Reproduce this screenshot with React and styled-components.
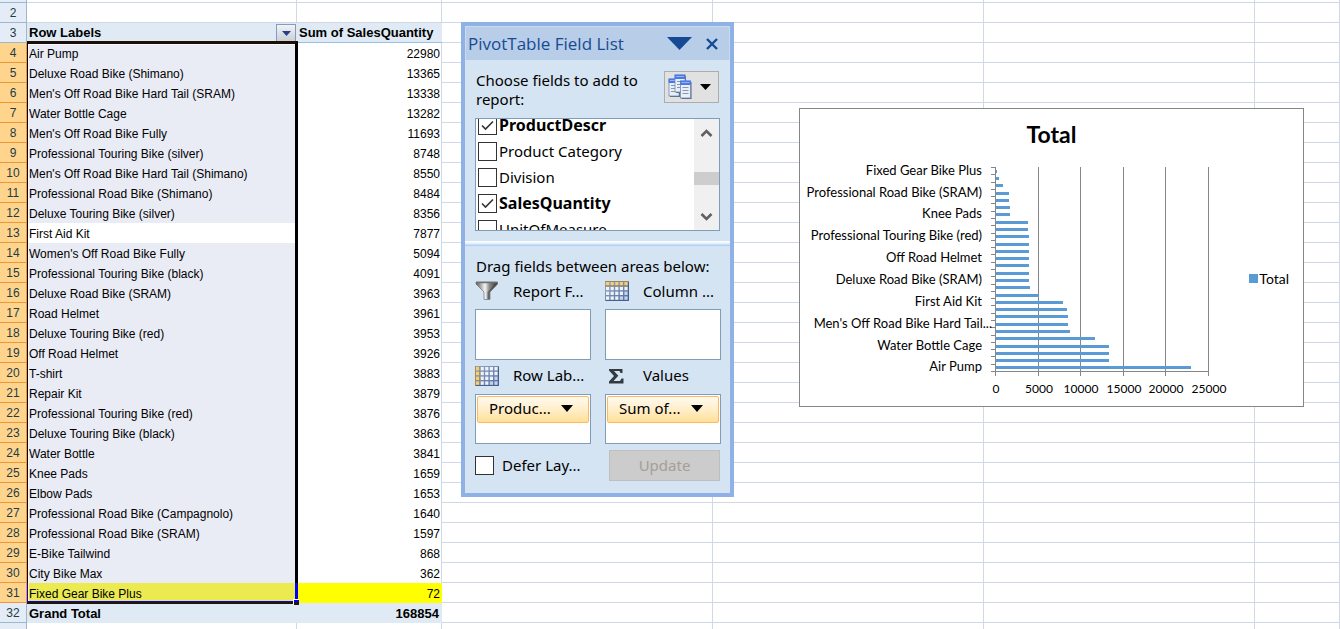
import React from "react";
import styled, { createGlobalStyle } from "styled-components";

const GlobalStyle = createGlobalStyle`
  *, *::before, *::after { box-sizing: border-box; }
  body { margin: 0; background: #fff; }
`;

const color = {
  grid: "#d0d7e5",
  header: "#e4ecf7",
  headerLine: "#9eb6ce",
  active: "#ffd58d",
  activeLine: "#f29536",
  pivot: "#dfeaf5",
  pivotLine: "#9bc0e6",
  selection: "#e9ebf5",
  frame: "#8fb1e5",
  panel: "#d5e4f2",
  box: "#7f9db9",
  bar: "#5b9bd5",
  axis: "#868686",
};

const rows = [
  ["Air Pump", 22980],
  ["Deluxe Road Bike (Shimano)", 13365],
  ["Men's Off Road Bike Hard Tail (SRAM)", 13338],
  ["Water Bottle Cage", 13282],
  ["Men's Off Road Bike Fully", 11693],
  ["Professional Touring Bike (silver)", 8748],
  ["Men's Off Road Bike Hard Tail (Shimano)", 8550],
  ["Professional Road Bike (Shimano)", 8484],
  ["Deluxe Touring Bike (silver)", 8356],
  ["First Aid Kit", 7877],
  ["Women's Off Road Bike Fully", 5094],
  ["Professional Touring Bike (black)", 4091],
  ["Deluxe Road Bike (SRAM)", 3963],
  ["Road Helmet", 3961],
  ["Deluxe Touring Bike (red)", 3953],
  ["Off Road Helmet", 3926],
  ["T-shirt", 3883],
  ["Repair Kit", 3879],
  ["Professional Touring Bike (red)", 3876],
  ["Deluxe Touring Bike (black)", 3863],
  ["Water Bottle", 3841],
  ["Knee Pads", 1659],
  ["Elbow Pads", 1653],
  ["Professional Road Bike (Campagnolo)", 1640],
  ["Professional Road Bike (SRAM)", 1597],
  ["E-Bike Tailwind", 868],
  ["City Bike Max", 362],
  ["Fixed Gear Bike Plus", 72],
];

/* ---------- worksheet ---------- */

const Workbook = styled.main`
  position: relative;
  height: 100vh;
  overflow: hidden;
  font-family: "Liberation Sans", Arial, sans-serif;
  font-size: 12px;
  color: #000;
`;

const Sheet = styled.table`
  width: 100%;
  min-width: 1260px;
  table-layout: fixed;
  border-collapse: separate;
  border-spacing: 0;
`;

const Col = styled.col`
  width: ${(p) => (p.$w ? `${p.$w}px` : "auto")};
`;

const Row = styled.tr`
  height: ${(p) => p.$h || 20}px;
`;

const RowNumber = styled.th`
  padding: ${(p) => (p.$blank ? 0 : 1)}px 0 0;
  font-weight: 400;
  line-height: 18px;
  text-align: center;
  color: #1f3c46;
  background: ${(p) => (p.$active ? color.active : color.header)};
  border-right: 1px solid ${(p) => (p.$active ? color.activeLine : color.headerLine)};
  border-bottom: 1px solid ${(p) => (p.$active ? color.activeLine : color.headerLine)};
`;

const Cell = styled.td`
  padding: 0;
  border-right: 1px solid ${color.grid};
  border-bottom: 1px solid ${color.grid};
`;

const LabelCell = styled.td`
  padding: 2px 2px 0;
  line-height: 18px;
  text-align: left;
  white-space: nowrap;
  background: ${(p) => p.$bg};
`;

const ValueCell = styled.td`
  padding: 2px 1px 0;
  line-height: 18px;
  text-align: right;
  background: ${(p) => p.$bg || "#fff"};
  border-right: 1px solid ${(p) => p.$bg || color.grid};
`;

const FieldHead = styled.th`
  padding: 0 0 0 2px;
  font-size: 13px;
  line-height: 18px;
  text-align: left;
  white-space: nowrap;
  background: ${color.pivot};
  border-bottom: 1px solid ${color.pivotLine};
`;

const HeadRow = styled.div`
  display: flex;
  justify-content: space-between;
  align-items: center;
  height: 19px;
  padding: 1px 1px 0 0;
`;

const TotalCell = styled.td`
  padding: 2px 3px 0 2px;
  font-size: 13px;
  font-weight: 700;
  line-height: 18px;
  text-align: ${(p) => (p.$right ? "right" : "left")};
  background: ${color.pivot};
`;

const FilterButton = styled.button`
  display: flex;
  align-items: center;
  justify-content: center;
  width: 20px;
  height: 19px;
  padding: 0;
  border: 1px solid #7f9cc6;
  background: linear-gradient(#f1f2f3, #c9cdd2);
`;

const Selection = styled.div`
  position: absolute;
  top: 41px;
  left: 27px;
  width: 271px;
  height: 563px;
  border: 3px solid #000;
  border-left-width: 1px;
  border-top-color: #1c0f06;
  border-bottom-color: #20140f;
  box-shadow: inset 1px 1px 0 rgba(255, 255, 255, 0.7);
  pointer-events: none;

  &::before {
    content: "";
    position: absolute;
    right: -3px;
    bottom: -1px;
    left: -1px;
    height: 19px;
    border: solid #0000ff;
    border-width: 0 3px 1px 1px;
  }
`;

const FillHandle = styled.span`
  position: absolute;
  right: -4px;
  bottom: -4px;
  width: 6px;
  height: 6px;
  border: solid #fff;
  border-width: 1px 0 0 1px;
  background: linear-gradient(#0000ff 50%, #2a1508 50%);
`;

/* ---------- field list window ---------- */

const Panel = styled.aside`
  position: absolute;
  top: 22px;
  left: 461px;
  width: 273px;
  border: 4px solid ${color.frame};
  background: ${color.panel};
  font-family: "Noto Sans", Tahoma, sans-serif;
  font-size: 15px;
  line-height: 19px;
`;

const TitleBar = styled.header`
  display: flex;
  align-items: center;
  height: 34px;
  padding: 0 11px 0 2px;
  border: 1px solid #c9dbf0;
  border-bottom: 0;
  background: #b8cde8;
`;

const PanelTitle = styled.h2`
  flex: 1;
  margin: 0;
  font-family: "Open Sans", "Segoe UI", sans-serif;
  font-size: 17px;
  font-weight: 400;
  line-height: 24px;
  color: #174a94;
`;

const TitleButton = styled.button`
  display: flex;
  padding: 0;
  margin-left: 14px;
  border: 0;
  background: none;
`;

const Section = styled.section`
  padding: ${(p) => (p.$lower ? "11px 9px 12px 10px" : "11px 10px 10px 10px")};
`;

const Chooser = styled.div`
  display: flex;
  justify-content: space-between;
  align-items: flex-start;
  height: 47px;
  padding-right: 1px;
`;

const Prompt = styled.p`
  width: ${(p) => (p.$full ? "auto" : "180px")};
  margin: 0 0 0 1px;
`;

const LayoutButton = styled.button`
  display: flex;
  align-items: center;
  justify-content: space-between;
  width: 55px;
  height: 32px;
  padding: 0 7px 0 3px;
  border: 1px solid #adadad;
  background: #e1e1e1;
`;

const ListBox = styled.div`
  display: flex;
  height: 113px;
  overflow: hidden;
  border: 1px solid ${color.box};
  background: #fff;
`;

const Fields = styled.ul`
  flex: 1;
  margin: -7px 0 0;
  padding: 0 0 0 2px;
  list-style: none;
`;

const Field = styled.label`
  display: flex;
  align-items: center;
  gap: 2px;
  height: 26px;
  font-size: ${(p) => (p.$bold ? 16 : 15)}px;
  font-weight: ${(p) => (p.$bold ? 700 : 400)};
`;

const BoxWrap = styled.span`
  display: grid;
  width: 19px;
  height: 19px;
  flex: none;

  & > * {
    grid-area: 1 / 1;
  }
  svg {
    pointer-events: none;
  }
`;

const Box = styled.input`
  appearance: none;
  width: 19px;
  height: 19px;
  margin: 0;
  border: 1px solid #333;
  background: #fff;
`;

const ScrollBar = styled.div`
  display: flex;
  flex-direction: column;
  align-items: center;
  width: 25px;
  padding: 9px 0 8px;
  background: #f0f0f0;
`;

const Thumb = styled.div`
  width: 25px;
  height: 13px;
  margin: auto 0 27px;
  background: #cdcdcd;
`;

const Splitter = styled.hr`
  height: 5px;
  margin: 0;
  border: 0;
  background: linear-gradient(#ffffff, #e4effb 50%, #a5c8f5);
`;

const Areas = styled.div`
  display: grid;
  grid-template-columns: 1fr 1fr;
  column-gap: 14px;
`;

const AreaTitle = styled.h3`
  display: flex;
  align-items: center;
  gap: 14px;
  height: ${(p) => (p.$tall ? 34 : 33)}px;
  margin: 0;
  padding-bottom: 3px;
  font-size: 15px;
  font-weight: 400;
  white-space: nowrap;
`;

const DropZone = styled.div`
  height: ${(p) => (p.$filled ? 50 : 51)}px;
  padding: 1px;
  border: 1px solid ${color.box};
  background: #fff;
`;

const Pill = styled.button`
  display: flex;
  align-items: center;
  justify-content: space-between;
  width: 100%;
  height: 27px;
  padding: 0 15px 2px 11px;
  border: 1px solid #fdb95f;
  border-radius: 2px;
  background: linear-gradient(#fffaf0, #ffeec8 50%, #ffe09a);
  font: inherit;
  color: #000;
`;

const Footer = styled.div`
  display: flex;
  justify-content: space-between;
  align-items: center;
  margin-top: 6px;
  padding-right: 1px;
`;

const Defer = styled.label`
  display: flex;
  align-items: center;
  gap: 8px;
`;

const UpdateButton = styled.button`
  width: 111px;
  height: 31px;
  padding: 0;
  border: 1px solid #bfbfbf;
  background: #cccccc;
  font: inherit;
  color: #a3a096;
`;

/* ---------- chart object ---------- */

const Chart = styled.figure`
  position: absolute;
  top: 108px;
  left: 799px;
  width: 505px;
  margin: 0;
  border: 1px solid #868686;
  background: #fff;
  font-family: Lato, Calibri, sans-serif;
  font-size: 13px;
`;

const ChartTitle = styled.figcaption`
  height: 51px;
  padding-top: 11px;
  font-size: 23px;
  font-weight: 700;
  line-height: 28px;
  text-align: center;
`;

const ChartBody = styled.div`
  display: flex;
  justify-content: space-between;
  padding-right: 14px;
`;

const Legend = styled.div`
  display: flex;
  align-items: center;
  gap: 1px;
  height: 236px;
  font-size: 14px;
`;

const Swatch = styled.span`
  width: 9px;
  height: 9px;
  background: ${color.bar};
`;

/* ---------- icons ---------- */

const Down = ({ w, h, fill = "#000" }) => (
  <svg width={w} height={h} viewBox="0 0 10 6" preserveAspectRatio="none" aria-hidden="true">
    <path d="M0 0H10L5 6Z" fill={fill} />
  </svg>
);

const Chevron = ({ up }) => (
  <svg width="13" height="10" viewBox="0 0 13 10" aria-hidden="true">
    <path d={up ? "M1.5 8L6.5 3L11.5 8" : "M1.5 2L6.5 7L11.5 2"} fill="none" stroke="#606060" strokeWidth="2.6" />
  </svg>
);

const CloseIcon = () => (
  <svg width="12" height="12" viewBox="0 0 12 12" aria-hidden="true">
    <path d="M1 1L11 11M11 1L1 11" stroke="#174a94" strokeWidth="2.4" />
  </svg>
);

const Page = ({ x, y }) => (
  <g transform={`translate(${x} ${y})`}>
    <rect x="1" y="1" width="10" height="17" fill="#56647c" />
    <rect width="10" height="17" fill="#e9eff8" stroke="#7189b0" strokeWidth=".8" />
    <rect x="-.4" y="-.4" width="10.8" height="4.4" fill="#4a78e6" />
    <rect x="1" y="1" width="8" height="1" fill="#8fb5ff" />
    <path d="M2 6.5H8M2 9.5H8M2 12.5H8" stroke="#8797b2" />
  </g>
);

const LayoutIcon = () => (
  <svg width="24" height="26" viewBox="0 0 24 26" aria-hidden="true">
    <Page x={1} y={5} />
    <Page x={7} y={1} />
    <Page x={12.5} y={7} />
  </svg>
);

const FunnelIcon = () => (
  <svg width="24" height="20" viewBox="0 0 24 20" aria-hidden="true">
    <defs>
      <linearGradient id="funnel">
        <stop offset="0" stopColor="#555" />
        <stop offset=".42" stopColor="#f6f6f6" />
        <stop offset=".62" stopColor="#8a8a8a" />
        <stop offset="1" stopColor="#333" />
      </linearGradient>
    </defs>
    <path d="M1 1H22.5V3L15 11V18.5H9V11L1 3Z" fill="url(#funnel)" stroke="#666" strokeWidth=".6" />
    <path d="M1 1.5H22.5" stroke="#6e6e6e" strokeWidth="1.4" />
    <path d="M14.6 11V18H12.5V11L20 3.5H22Z" fill="#444" opacity=".6" />
  </svg>
);

const GridIcon = ({ side }) => (
  <svg width="24" height="20" viewBox="0 0 24 20" aria-hidden="true">
    <defs>
      <linearGradient id="cells" x2="1" y2="1">
        <stop offset="0" stopColor="#98a6c2" />
        <stop offset="1" stopColor="#4f6ca0" />
      </linearGradient>
    </defs>
    <rect width="24" height="20" fill="url(#cells)" />
    {[0, 1, 2, 3, 4].map((c) =>
      [0, 1, 2, 3].map((r) => {
        const gold = side ? c === 0 : r === 0;
        return (
          <rect key={`${c}-${r}`} x={1 + c * 4.6} y={1 + r * 4.8} width="3.2" height="3.4"
            fill={gold ? "#f2cf78" : c + r > 5 ? "#c3d2ee" : "#eef2fb"} />
        );
      })
    )}
    {side
      ? <path d="M.5 0V20M4.8 0V20" stroke="#a98a48" />
      : <path d="M0 .5H24M0 5H24" stroke="#9d8355" />}
    <path d="M23.5 1V19.5H1" fill="none" stroke="#44608f" />
  </svg>
);

const SigmaIcon = () => (
  <svg width="24" height="20" viewBox="0 0 24 20" aria-hidden="true">
    <path d="M4 3H17.5V7H15.5L14.5 5H9L13.3 9.8L8.5 15H15L16.5 12.5H18.5V17.5H4V15.5L9 10L4 4.5Z" fill="#333a42" />
  </svg>
);

/* ---------- pieces ---------- */

function CheckBox({ id, checked }) {
  return (
    <BoxWrap>
      <Box id={id} type="checkbox" defaultChecked={checked} />
      {checked && (
        <svg width="19" height="19" viewBox="0 0 19 19" aria-hidden="true">
          <path d="M4 9.5L7.5 13L15 5.5" fill="none" stroke="#333" strokeWidth="1.6" />
        </svg>
      )}
    </BoxWrap>
  );
}

function Blanks() {
  return (
    <>
      <Cell />
      <Cell />
      <Cell />
      <Cell />
    </>
  );
}

function Worksheet() {
  return (
    <Sheet>
      <colgroup>
        {[27, 270, 145, 271, 271, 271, 0].map((w, i) => <Col key={i} $w={w} />)}
      </colgroup>
      <tbody>
        <Row $h={3}><RowNumber $blank /><Cell /><Cell /><Blanks /></Row>
        <Row><RowNumber scope="row">2</RowNumber><Cell /><Cell /><Blanks /></Row>
        <Row>
          <RowNumber scope="row">3</RowNumber>
          <FieldHead scope="col">
            <HeadRow>
              Row Labels
              <FilterButton aria-label="Filter row labels"><Down w={9} h={5} fill="#24408f" /></FilterButton>
            </HeadRow>
          </FieldHead>
          <FieldHead scope="col"><HeadRow>Sum of SalesQuantity</HeadRow></FieldHead>
          <Blanks />
        </Row>
        {rows.map(([name, qty], i) => {
          const last = i === rows.length - 1;
          return (
            <Row key={name}>
              <RowNumber scope="row" $active>{i + 4}</RowNumber>
              <LabelCell $bg={last ? "#ebeb50" : i === 9 ? "#fff" : color.selection}>{name}</LabelCell>
              <ValueCell $bg={last ? "#ffff00" : undefined}>{qty}</ValueCell>
              <Blanks />
            </Row>
          );
        })}
        <Row>
          <RowNumber scope="row">32</RowNumber>
          <TotalCell>Grand Total</TotalCell>
          <TotalCell $right>168854</TotalCell>
          <Blanks />
        </Row>
        <Row><RowNumber $blank /><Cell /><Cell /><Blanks /></Row>
      </tbody>
    </Sheet>
  );
}

function FieldList() {
  const fields = [
    ["ProductDescr", true],
    ["Product Category", false],
    ["Division", false],
    ["SalesQuantity", true],
    ["UnitOfMeasure", false],
  ];
  return (
    <Panel>
      <TitleBar>
        <PanelTitle>PivotTable Field List</PanelTitle>
        <TitleButton aria-label="Options"><Down w={25} h={13} fill="#174a94" /></TitleButton>
        <TitleButton aria-label="Close"><CloseIcon /></TitleButton>
      </TitleBar>
      <Section>
        <Chooser>
          <Prompt>Choose fields to add to report:</Prompt>
          <LayoutButton aria-label="Layout"><LayoutIcon /><Down w={11} h={6} /></LayoutButton>
        </Chooser>
        <ListBox>
          <Fields>
            {fields.map(([name, on]) => (
              <li key={name}>
                <Field htmlFor={name} $bold={on}><CheckBox id={name} checked={on} />{name}</Field>
              </li>
            ))}
          </Fields>
          <ScrollBar><Chevron up /><Thumb /><Chevron /></ScrollBar>
        </ListBox>
      </Section>
      <Splitter />
      <Section $lower>
        <Prompt $full>Drag fields between areas below:</Prompt>
        <Areas>
          <AreaTitle><FunnelIcon />Report F...</AreaTitle>
          <AreaTitle><GridIcon />Column ...</AreaTitle>
          <DropZone />
          <DropZone />
          <AreaTitle $tall><GridIcon side />Row Lab...</AreaTitle>
          <AreaTitle $tall><SigmaIcon />Values</AreaTitle>
          <DropZone $filled><Pill>Produc...<Down w={12} h={7} /></Pill></DropZone>
          <DropZone $filled><Pill>Sum of...<Down w={12} h={7} /></Pill></DropZone>
        </Areas>
        <Footer>
          <Defer htmlFor="defer"><CheckBox id="defer" />Defer Lay...</Defer>
          <UpdateButton disabled>Update</UpdateButton>
        </Footer>
      </Section>
    </Panel>
  );
}

function PivotChart() {
  const left = 195;
  const top = 7;
  const height = 204;
  const bottom = top + height;
  const step = height / rows.length;
  const scale = 213 / 25000;
  return (
    <Chart>
      <ChartTitle>Total</ChartTitle>
      <ChartBody>
        <svg width="440" height="246" viewBox="0 0 440 246" role="img" aria-label="Total by product">
          {[5000, 10000, 15000, 20000, 25000].map((v) => (
            <rect key={v} x={Math.round(left + v * scale)} y={top} width="1" height={height + 5} fill={color.axis} />
          ))}
          {rows.map(([name, qty], i) => (
            <rect key={name} x={left + 1} y={Math.round(bottom - (i + 0.5) * step) - 1}
              width={Math.max(1, Math.floor(qty * scale))} height="3" fill={color.bar} />
          ))}
          {Array.from({ length: 29 }, (_, i) => (
            <rect key={i} x={left - 4} y={Math.round(bottom - i * step)} width="4" height="1" fill={color.axis} />
          ))}
          <rect x={left} y={top} width="1" height={height + 5} fill={color.axis} />
          <rect x={left} y={bottom} width="214" height="1" fill={color.axis} />
          {rows.map(([name], i) => {
            if (i % 3) return null;
            const cut = name.endsWith("Tail (Shimano)");
            return (
              <text key={name} x={cut ? 192 : 182} y={Math.round(bottom - (i + 0.5) * step) + 4} textAnchor="end">
                {cut ? name.replace(" (Shimano)", "...") : name}
              </text>
            );
          })}
          {[0, 5000, 10000, 15000, 20000, 25000].map((v) => (
            <text key={v} x={Math.round(left + v * scale) + 1} y="233" fontSize="12" textAnchor="middle">{v}</text>
          ))}
        </svg>
        <Legend><Swatch />Total</Legend>
      </ChartBody>
    </Chart>
  );
}

export default function App() {
  return (
    <>
      <GlobalStyle />
      <Workbook>
        <Worksheet />
        <Selection><FillHandle /></Selection>
        <FieldList />
        <PivotChart />
      </Workbook>
    </>
  );
}
